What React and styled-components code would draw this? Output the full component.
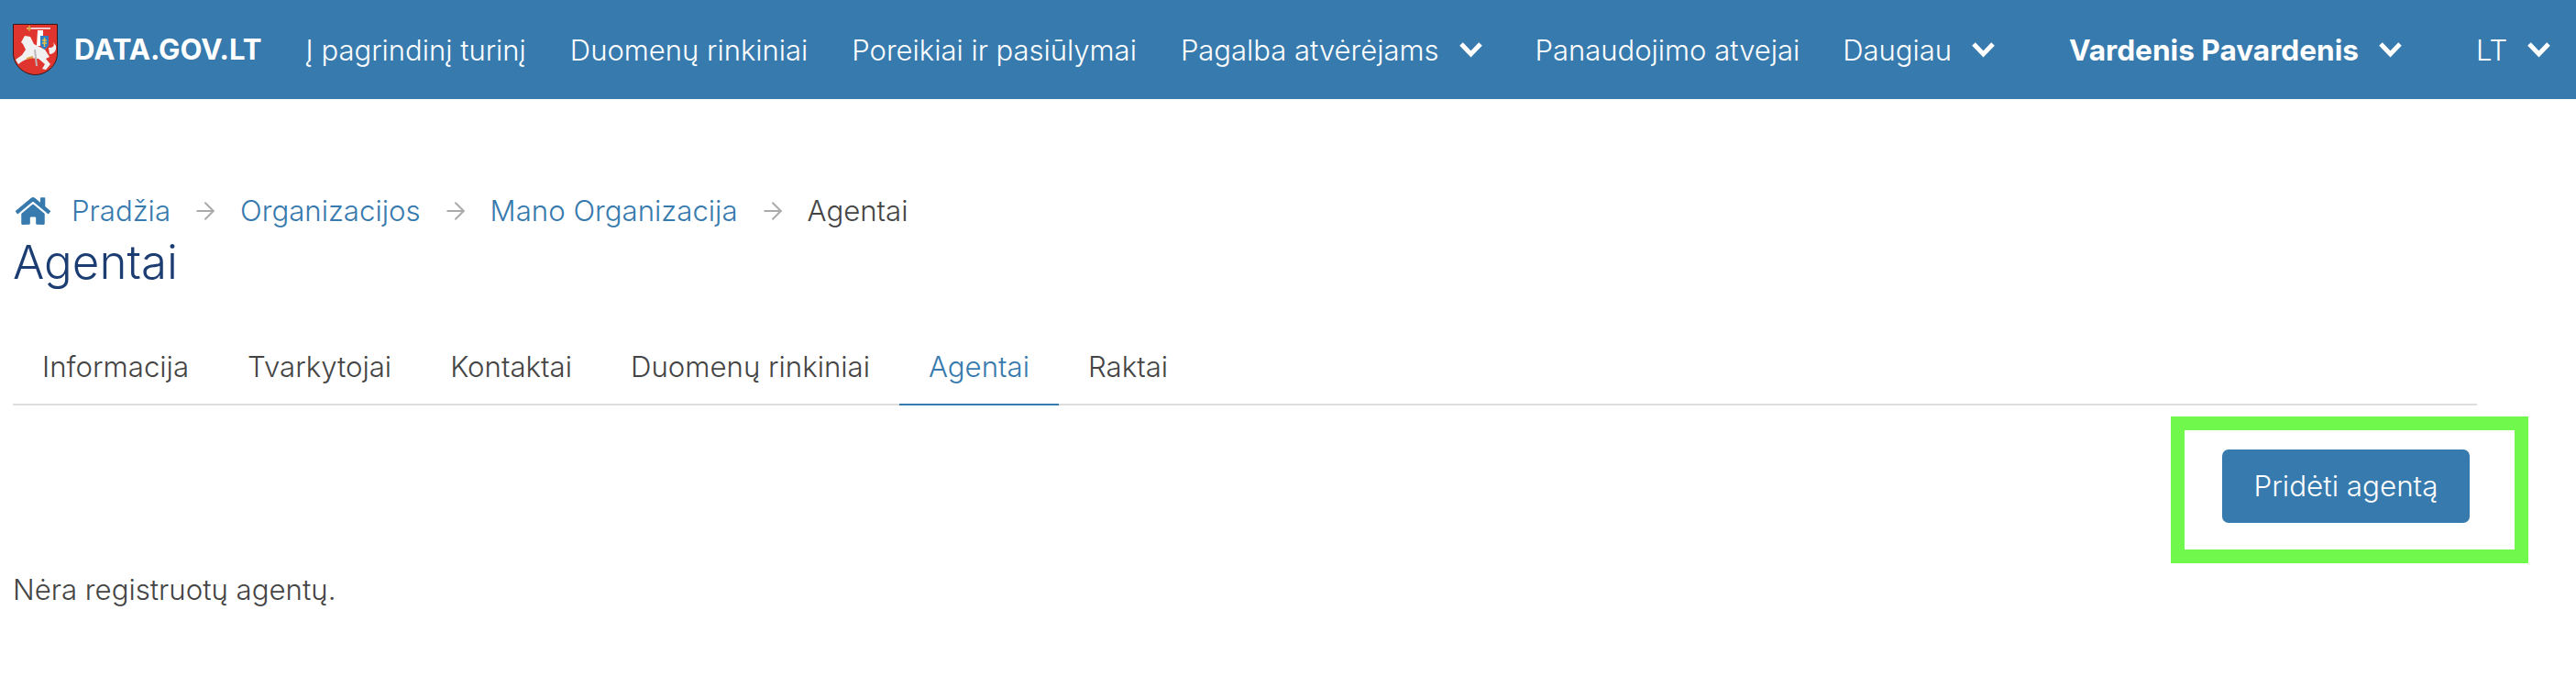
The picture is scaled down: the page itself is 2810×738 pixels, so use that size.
import styled, { createGlobalStyle } from "styled-components";
import { FaHome } from "react-icons/fa";
import { ArrowRight } from "lucide-react";

const GlobalStyle = createGlobalStyle`
  body {
    margin: 0;
    background: #fff;
    font-family: Inter, "Noto Sans", sans-serif;
    color: #444;
    font-size: 31.2px;
  }
`;

const Navbar = styled.nav`
  height: 108px;
  background: #377aae;
  display: flex;
  align-items: center;
  padding-left: 14px;
  color: #fff;
  font-size: 31px;
  white-space: nowrap;
`;
const Brand = styled.a`
  display: flex;
  align-items: center;
  gap: 18px;
  font-weight: 700;
  font-size: 31.2px;
  margin-right: 48px;
`;
const NavItem = styled.a`
  display: flex;
  align-items: center;
  gap: 21px;
  font-weight: ${(p) => (p.$bold ? 700 : 300)};
  font-size: ${(p) => (p.$bold ? "31.6px" : "inherit")};
  margin-right: ${(p) => p.$gap || 47}px;
`;
const ChevronIcon = styled.svg`
  width: 27px;
  height: 20px;
  fill: none;
  stroke: #fff;
  stroke-width: 5;
`;
const Page = styled.main`
  width: 2688px;
  padding: 100px 0 0 14px;
`;
const Breadcrumb = styled.div`
  display: flex;
  align-items: center;
  height: 44px;
  font-weight: 300;
`;
const Crumb = styled.a`
  color: ${(p) => (p.$current ? "#444" : "#377aae")};
  display: flex;
  align-items: center;
  gap: 22px;
  svg {
    width: 40px;
    height: 34px;
    margin-left: 2px;
  }
`;
const Arrow = styled(ArrowRight)`
  width: 30px;
  height: 30px;
  color: #aaa;
  margin: 0 23px;
  stroke-width: 1.6;
`;
const Title = styled.h1`
  margin: 4px 0 0;
  font-size: 51px;
  font-weight: 300;
  line-height: 60px;
  color: #1c3d72;
`;
const Tabs = styled.ul`
  list-style: none;
  margin: 46px 0 0;
  padding: 0;
  display: flex;
  border-bottom: 2px solid #ddd;
`;
const Tab = styled.li`
  padding: 0 32px;
  height: 78px;
  line-height: 77px;
  font-weight: 300;
  margin-bottom: -2px;
  color: ${(p) => (p.$active ? "#377aae" : "#444")};
  border-bottom: 2px solid ${(p) => (p.$active ? "#377aae" : "transparent")};
`;
const Actions = styled.div`
  display: flex;
  justify-content: flex-end;
  padding: 48px 8px 0 0;
`;
const AddButton = styled.button`
  position: relative;
  width: 270px;
  height: 80px;
  background: #377aae;
  color: #fff;
  border: 0;
  border-radius: 7px;
  font: 300 31.4px Inter, sans-serif;
  &::after {
    content: "";
    position: absolute;
    inset: -36px -64px -44px -56px;
    border: 15px solid #70f94c;
  }
`;
const Empty = styled.p`
  margin: 54px 0 0;
  font-weight: 300;
`;

const Chevron = () => (
  <ChevronIcon viewBox="0 0 27 20">
    <path d="M3 4L13.5 15L24 4" />
  </ChevronIcon>
);

const Logo = () => (
  <svg width="49" height="56" viewBox="0 0 49 56">
    <path d="M0.5 0.5H48.5V32C48.5 46 36 55.5 24.5 55.5C13 55.5 0.5 46 0.5 32Z" fill="#e0352f" stroke="#3a1512" />
    <path d="M9 20L13 13L19 14L23 22L35 28L40 36L36 38L41 44L36 50L32 49L35 44L28 38L18 37L10 41L6 44L3 39L10 34L14 28L11 22Z" fill="#f1f1f1" />
    <path d="M39 26C44 26 46 24 44 20L47 24C48 30 44 33 40 33Z" fill="#f1f1f1" />
    <path d="M27 7H33V13H30V24H26Z" fill="#fff" />
    <path d="M30 13H39V22C39 25 36 27 34.5 28C33 27 30 25 30 22Z" fill="#2f7fc4" />
    <path d="M34.5 15V25M32 18H37M32 21H37" stroke="#e8c547" strokeWidth="1.4" />
    <path d="M15 5H41" stroke="#f3f3f3" strokeWidth="1.6" />
    <path d="M15 5H20M18 2V8" stroke="#d9a441" strokeWidth="1.6" />
    <path d="M24 28L26 46" stroke="#b9b9b9" strokeWidth="2" />
    <path d="M15 38L22 36" stroke="#d9a441" strokeWidth="2" />
  </svg>
);

const App = () => (
  <>
    <GlobalStyle />
    <Navbar>
      <Brand>
        <Logo />
        DATA.GOV.LT
      </Brand>
      <NavItem $gap={48}>Į pagrindinį turinį</NavItem>
      <NavItem $gap={48}>Duomenų rinkiniai</NavItem>
      <NavItem $gap={48}>Poreikiai ir pasiūlymai</NavItem>
      <NavItem $gap={57}>
        Pagalba atvėrėjams <Chevron />
      </NavItem>
      <NavItem>Panaudojimo atvejai</NavItem>
      <NavItem $gap={80}>
        Daugiau <Chevron />
      </NavItem>
      <NavItem $bold $gap={80}>
        Vardenis Pavardenis <Chevron />
      </NavItem>
      <NavItem $gap={1}>
        LT <Chevron />
      </NavItem>
    </Navbar>
    <Page>
      <Breadcrumb>
        <Crumb>
          <FaHome />
          Pradžia
        </Crumb>
        <Arrow />
        <Crumb>Organizacijos</Crumb>
        <Arrow />
        <Crumb>Mano Organizacija</Crumb>
        <Arrow />
        <Crumb $current>Agentai</Crumb>
      </Breadcrumb>
      <Title>Agentai</Title>
      <Tabs>
        <Tab>Informacija</Tab>
        <Tab>Tvarkytojai</Tab>
        <Tab>Kontaktai</Tab>
        <Tab>Duomenų rinkiniai</Tab>
        <Tab $active>Agentai</Tab>
        <Tab>Raktai</Tab>
      </Tabs>
      <Actions>
        <AddButton>Pridėti agentą</AddButton>
      </Actions>
      <Empty>Nėra registruotų agentų.</Empty>
    </Page>
  </>
);

export default App;
